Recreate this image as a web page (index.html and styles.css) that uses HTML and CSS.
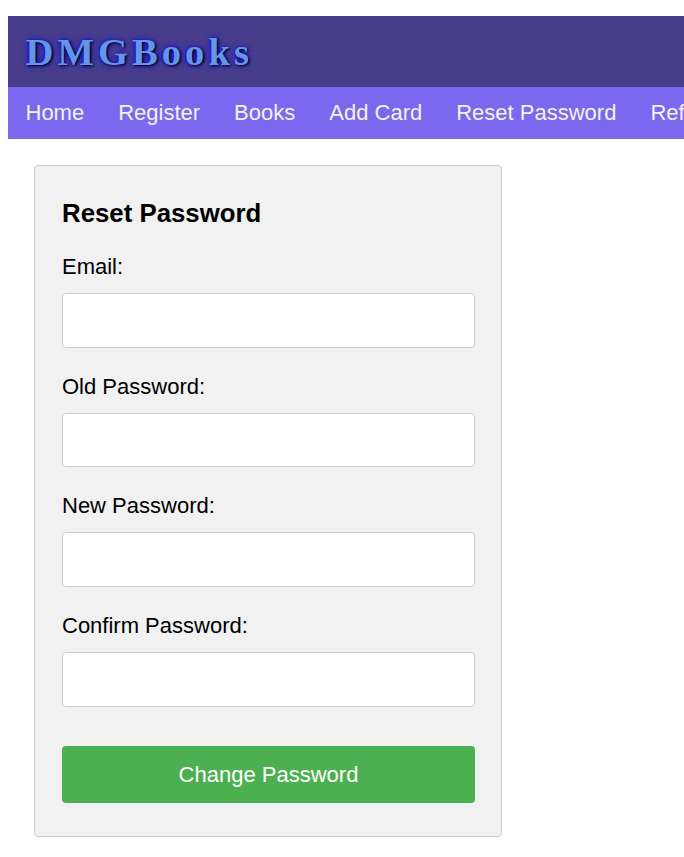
FILE: index.html
```html
<!DOCTYPE html>
<html lang="en">
<head>
<meta charset="utf-8">
<title>DMGBooks</title>
<link rel="stylesheet" href="styles.css">
</head>
<body>
<header class="header"><h1 class="brand">DMGBooks</h1></header>
<nav class="nav">
<a href="#">Home</a><a href="#">Register</a><a href="#">Books</a><a href="#">Add Card</a><a href="#">Reset Password</a><a href="#">Ref</a>
</nav>
<main class="card">
<h2 class="title">Reset Password</h2>
<form>
<label class="field">Email:<input type="email"></label>
<label class="field">Old Password:<input type="password"></label>
<label class="field">New Password:<input type="password"></label>
<label class="field">Confirm Password:<input type="password"></label>
<button class="submit" type="button">Change Password</button>
</form>
</main>
</body>
</html>
```

FILE: styles.css
```css
* { box-sizing: border-box; }
body {
  margin: 16px 0 0 8px;
  background: #fff;
  font-family: "Liberation Sans", Arial, sans-serif;
  font-size: 22px;
  line-height: 26px;
  color: #000;
  overflow: hidden;
}
.header {
  height: 71px;
  padding: 14px 17.5px;
  background: #483d8b;
}
.brand {
  margin: 0;
  font: bold 38.67px/44px "Liberation Serif", "Times New Roman", serif;
  letter-spacing: 4px;
  color: #6495ed;
  text-shadow: 1.33px 1.33px 2.67px black, 0 0 6.67px blue;
}
.nav {
  display: flex;
  gap: 34px;
  height: 52px;
  padding: 13px 0 13px 17.5px;
  background: #7b68ee;
  white-space: nowrap;
  overflow: hidden;
}
.nav a { color: #f2f2f2; text-decoration: none; }
.card {
  width: 468px;
  height: 672px;
  margin: 26px 0 0 26px;
  padding: 32px 27px 0;
  background: #f1f1f1;
  border: 1px solid #ccc;
  border-radius: 4px;
}
.title { margin: 0 0 26px; font-size: 25.8px; line-height: 30px; }
.field { display: block; height: 119.66px; }
.field input {
  display: block;
  width: 413px;
  height: 54.67px;
  margin-top: 13px;
  border: 1px solid #ccc;
  border-radius: 4px;
  background: #fff;
}
.submit {
  display: block;
  width: 413px;
  height: 57px;
  margin-top: 13.6px;
  border: 0;
  border-radius: 4px;
  background: #4caf50;
  color: #fff;
  font: inherit;
}
```
